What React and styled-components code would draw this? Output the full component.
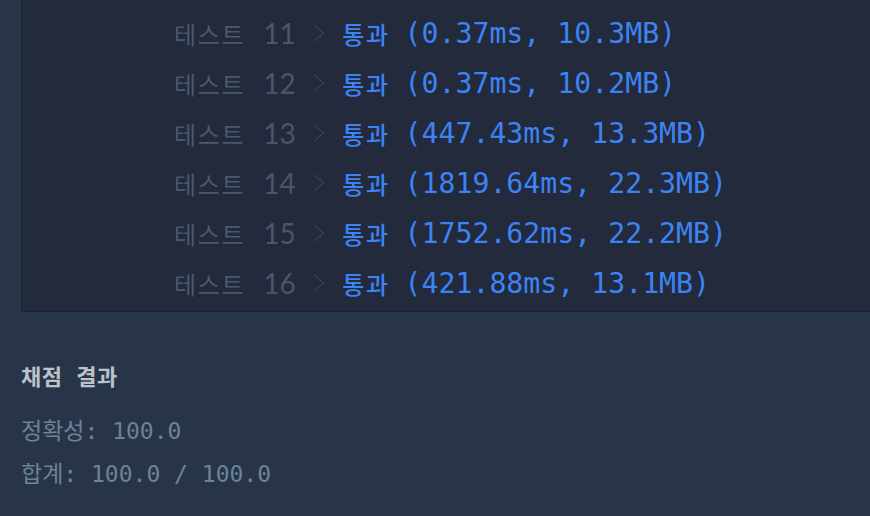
import React from "react";
import styled, { createGlobalStyle } from "styled-components";

const GlobalStyle = createGlobalStyle`
  html, body {
    margin: 0;
    padding: 0;
    background: #283548;
    overflow: hidden;
  }
`;

const results = [
  { no: 11, time: "0.37ms", mem: "10.3MB" },
  { no: 12, time: "0.37ms", mem: "10.2MB" },
  { no: 13, time: "447.43ms", mem: "13.3MB" },
  { no: 14, time: "1819.64ms", mem: "22.3MB" },
  { no: 15, time: "1752.62ms", mem: "22.2MB" },
  { no: 16, time: "421.88ms", mem: "13.1MB" },
];

const Chevron = () => (
  <ChevronIcon viewBox="0 0 12 18" width="12" height="18">
    <path d="M1.5 1 L10.5 9 L1.5 17" fill="none" stroke="#37425a" strokeWidth="1.2" />
  </ChevronIcon>
);

const App = () => {
  return (
    <Page>
      <GlobalStyle />
      <Console>
        {results.map((r) => (
          <Row key={r.no}>
            <Label>테스트</Label>
            <Num>{r.no}</Num>
            <Chevron />
            <Pass>통과</Pass>
            <Detail>
              ({r.time}, {r.mem})
            </Detail>
          </Row>
        ))}
      </Console>
      <Summary>
        <SummaryTitle>채점 결과</SummaryTitle>
        <SummaryLine>정확성: 100.0</SummaryLine>
        <SummaryLine>합계: 100.0 / 100.0</SummaryLine>
      </Summary>
    </Page>
  );
};

export default App;

const Page = styled.div`
  width: 870px;
  height: 516px;
  padding-left: 21px;
  box-sizing: border-box;
`;

const Console = styled.div`
  margin-top: -1px;
  width: 880px;
  background: #222a3b;
  border: 1px solid #1a2131;
  padding: 8px 0 3px 152px;
  box-sizing: border-box;
`;

const Row = styled.div`
  display: flex;
  align-items: center;
  height: 50px;
`;

const Label = styled.span`
  font-family: "Noto Sans CJK KR", sans-serif;
  font-size: 24px;
  color: #4c586b;
  letter-spacing: 1.7px;
`;

const Num = styled.span`
  font-family: "Lato", "Noto Sans", sans-serif;
  font-size: 28px;
  color: #4a5669;
  margin-left: 18px;
  width: 50px;
`;

const ChevronIcon = styled.svg`
  display: block;
  margin-right: 17px;
  margin-top: -1px;
`;

const Pass = styled.span`
  font-family: "Noto Sans CJK KR", sans-serif;
  font-size: 24px;
  font-weight: 500;
  color: #3d83f4;
  letter-spacing: 1.5px;
`;

const Detail = styled.span`
  font-family: "DejaVu Sans Mono", monospace;
  font-size: 28.2px;
  color: #3d83f4;
  margin-left: 15px;
  white-space: pre;
`;

const Summary = styled.div`
  padding-top: 50px;
  display: flex;
  flex-direction: column;
`;

const SummaryTitle = styled.div`
  font-family: "DejaVu Sans Mono", "Noto Sans CJK KR", monospace;
  font-size: 22px;
  font-weight: 700;
  color: #bac3cd;
  line-height: 32px;
  letter-spacing: 0.5px;
  margin-bottom: 21px;
`;

const SummaryLine = styled.div`
  font-family: "DejaVu Sans Mono", "Noto Sans CJK KR", monospace;
  font-size: 23px;
  color: #6b8497;
  line-height: 32px;
  margin-bottom: 11px;
`;
